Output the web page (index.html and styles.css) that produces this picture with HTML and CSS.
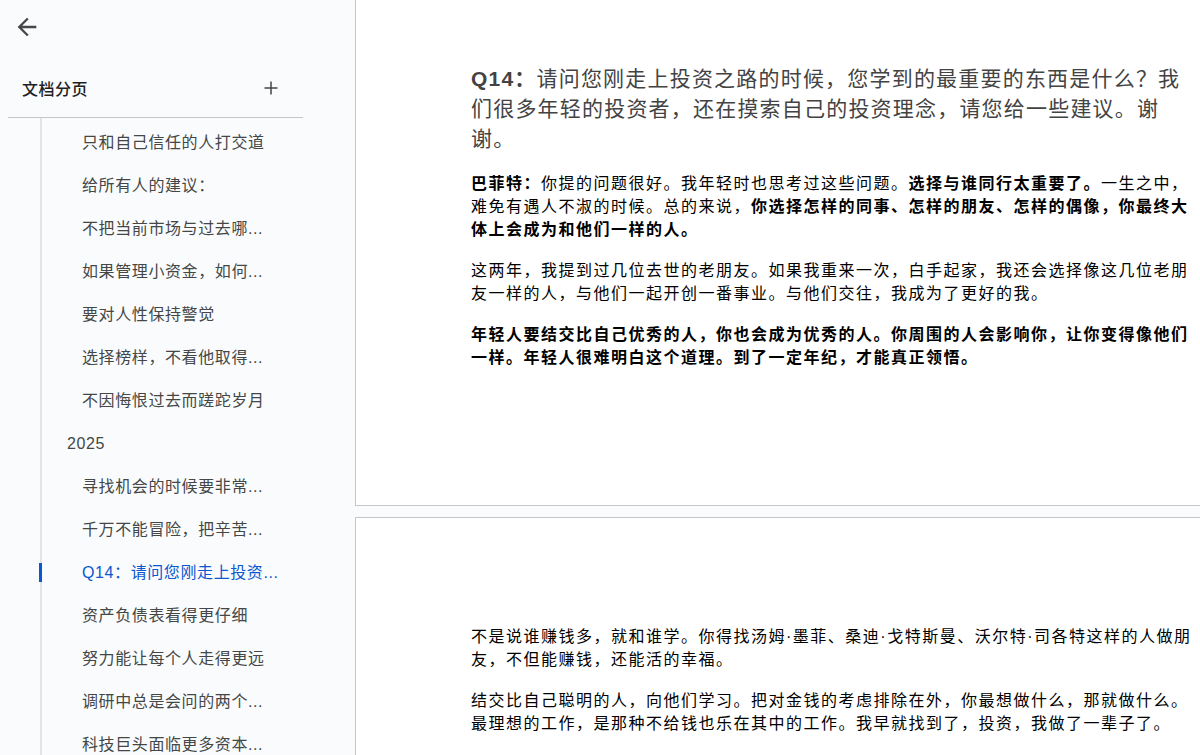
FILE: index.html
```html
<!DOCTYPE html>
<html lang="zh">
<head>
  <meta charset="UTF-8">
  <title>文档分页</title>
  <meta name="viewport" content="width=device-width, initial-scale=1.0">
  <link rel="stylesheet" href="styles.css">
</head>
<body>
  <div class="app">
    <aside class="sidebar">
      <button class="back" title="返回">
        <svg viewBox="0 0 24 24"><path d="M20 11H7.83l5.59-5.59L12 4l-8 8 8 8 1.41-1.41L7.83 13H20v-2z"/></svg>
      </button>

      <div class="outline">
        <div class="outline-head">
          <span>文档分页</span>
          <button class="add" title="添加分页">
            <svg viewBox="0 0 16 16"><path d="M8 1.5v13M1.5 8h13"/></svg>
          </button>
        </div>

        <ul class="tabs">
          <li class="tab sub">只和自己信任的人打交道</li>
          <li class="tab sub">给所有人的建议：</li>
          <li class="tab sub">不把当前市场与过去哪...</li>
          <li class="tab sub">如果管理小资金，如何...</li>
          <li class="tab sub">要对人性保持警觉</li>
          <li class="tab sub">选择榜样，不看他取得...</li>
          <li class="tab sub">不因悔恨过去而蹉跎岁月</li>
          <li class="tab">2025</li>
          <li class="tab sub">寻找机会的时候要非常...</li>
          <li class="tab sub">千万不能冒险，把辛苦...</li>
          <li class="tab sub active">Q14：请问您刚走上投资...</li>
          <li class="tab sub">资产负债表看得更仔细</li>
          <li class="tab sub">努力能让每个人走得更远</li>
          <li class="tab sub">调研中总是会问的两个...</li>
          <li class="tab sub">科技巨头面临更多资本...</li>
        </ul>
      </div>
    </aside>

    <main class="canvas">
      <div class="pages">
        <section class="page">
          <h2><b>Q14：</b>请问您刚走上投资之路的时候，您学到的最重要的东西是什么？我们很多年轻的投资者，还在摸索自己的投资理念，请您给一些建议。谢谢。</h2>
          <p><b>巴菲特：</b>你提的问题很好。我年轻时也思考过这些问题。<b>选择与谁同行太重要了。</b>一生之中，难免有遇人不淑的时候。总的来说，<b>你选择怎样的同事、怎样的朋友、怎样的偶像，你最终大体上会成为和他们一样的人。</b></p>
          <p>这两年，我提到过几位去世的老朋友。如果我重来一次，白手起家，我还会选择像这几位老朋友一样的人，与他们一起开创一番事业。与他们交往，我成为了更好的我。</p>
          <p><b>年轻人要结交比自己优秀的人，你也会成为优秀的人。你周围的人会影响你，让你变得像他们一样。年轻人很难明白这个道理。到了一定年纪，才能真正领悟。</b></p>
        </section>

        <section class="page">
          <p>不是说谁赚钱多，就和谁学。你得找汤姆·墨菲、桑迪·戈特斯曼、沃尔特·司各特这样的人做朋友，不但能赚钱，还能活的幸福。</p>
          <p>结交比自己聪明的人，向他们学习。把对金钱的考虑排除在外，你最想做什么，那就做什么。最理想的工作，是那种不给钱也乐在其中的工作。我早就找到了，投资，我做了一辈子了。</p>
        </section>
      </div>
    </main>
  </div>
</body>
</html>
```

FILE: styles.css
```css
html, body {
  margin: 0;
  height: 100%;
}

body {
  font-family: "Liberation Sans", "Noto Sans CJK SC", sans-serif;
  background-color: #f9fbfd;
  color: #000;
  overflow: hidden;
}

button {
  font: inherit;
  background: none;
  border: none;
  padding: 0;
  cursor: pointer;
}

.app {
  display: flex;
  height: 100vh;
}

/* sidebar */

.sidebar {
  width: 355px;
  flex-shrink: 0;
}

.back {
  display: block;
  width: 28px;
  height: 28px;
  margin: 13px 0 0 13px;
}

.back svg {
  width: 28px;
  height: 28px;
  fill: #444746;
}

.outline {
  margin-left: 8px;
  width: 295px;
}

.outline-head {
  display: flex;
  align-items: center;
  justify-content: space-between;
  height: 44px;
  margin-top: 25px;
  padding: 0 24px 7px 14px;
  border-bottom: 1px solid #c7c7c7;
  font-size: 16px;
  letter-spacing: 0.5px;
  font-weight: 500;
  color: #1f1f1f;
}

.add {
  width: 16px;
  height: 16px;
}

.add svg {
  display: block;
  width: 16px;
  height: 16px;
  fill: none;
  stroke: #444746;
  stroke-width: 1.5;
}

.tabs {
  list-style: none;
  margin: 0 0 0 32px;
  padding: 3px 0 0;
  border-left: 2px solid #e3e3e3;
}

.tab {
  position: relative;
  height: 43px;
  line-height: 43px;
  padding-left: 25px;
  font-size: 16px;
  letter-spacing: 0.6px;
  color: #444746;
  white-space: nowrap;
}

.tab.sub {
  padding-left: 40px;
}

.tab.active {
  color: #0b57d0;
}

.tab.active::before {
  content: "";
  position: absolute;
  left: -3px;
  top: 12px;
  width: 3px;
  height: 19px;
  background: #0b57d0;
}

/* document */

.canvas {
  flex: 1;
  overflow: hidden;
}

.pages {
  display: flex;
  flex-direction: column;
  gap: 11px;
  margin-top: -44px;
}

.page {
  flex-shrink: 0;
  box-sizing: border-box;
  width: 954px;
  height: 550px;
  padding: 107px 115px 0;
  background: #fff;
  border: 1px solid #c7c7c7;
}

.page h2 {
  margin: 0 0 18px;
  font-size: 21px;
  line-height: 30px;
  letter-spacing: 1.2px;
  font-weight: 400;
  color: #434343;
}

.page p {
  margin: 0 0 18px;
  font-size: 16px;
  line-height: 23px;
  letter-spacing: 1.5px;
}
```
